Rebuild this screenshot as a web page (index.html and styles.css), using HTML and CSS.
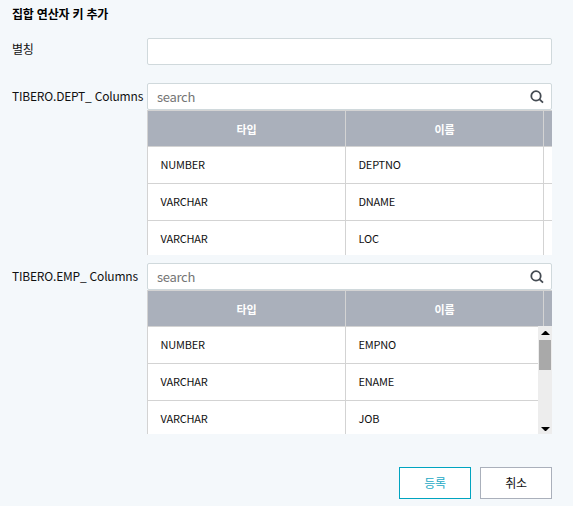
FILE: index.html
```html
<!DOCTYPE html>
<html lang="ko">
<head>
<meta charset="utf-8">
<title>집합 연산자 키 추가</title>
<link rel="stylesheet" href="styles.css">
</head>
<body>
<main class="dialog">
  <h1 class="title">집합 연산자 키 추가</h1>
  <div class="row alias">
    <label class="label" for="alias">별칭</label>
    <input class="field" id="alias" type="text">
  </div>
  <div class="row dept">
    <span class="label">TIBERO.DEPT_ Columns</span>
    <section class="picker">
      <div class="search">
        <input class="field" type="text" placeholder="search">
        <svg class="lens" viewBox="0 0 14 14"><circle cx="6" cy="5.9" r="4.7"/><path d="M9.3 9.2L13 12.7"/></svg>
      </div>
      <div class="grid">
        <div class="line head"><span>타입</span><span>이름</span><span></span></div>
        <div class="body">
          <div class="line"><span>NUMBER</span><span>DEPTNO</span><span></span></div>
          <div class="line"><span>VARCHAR</span><span>DNAME</span><span></span></div>
          <div class="line"><span>VARCHAR</span><span>LOC</span><span></span></div>
        </div>
      </div>
    </section>
  </div>
  <div class="row emp">
    <span class="label">TIBERO.EMP_ Columns</span>
    <section class="picker">
      <div class="search">
        <input class="field" type="text" placeholder="search">
        <svg class="lens" viewBox="0 0 14 14"><circle cx="6" cy="5.9" r="4.7"/><path d="M9.3 9.2L13 12.7"/></svg>
      </div>
      <div class="grid">
        <div class="line head"><span>타입</span><span>이름</span><span></span></div>
        <div class="body">
          <div class="line"><span>NUMBER</span><span>EMPNO</span><span></span></div>
          <div class="line"><span>VARCHAR</span><span>ENAME</span><span></span></div>
          <div class="line"><span>VARCHAR</span><span>JOB</span><span></span></div>
        </div>
        <div class="scrollbar">
          <svg class="arrow" viewBox="0 0 9 4" preserveAspectRatio="none"><path d="M0 4L4 0H5L9 4Z"/></svg>
          <div class="thumb"></div>
          <svg class="arrow down" viewBox="0 0 9 4" preserveAspectRatio="none"><path d="M0 0L4 4H5L9 0Z"/></svg>
        </div>
      </div>
    </section>
  </div>
  <div class="actions">
    <button class="button primary">등록</button>
    <button class="button">취소</button>
  </div>
</main>
</body>
</html>
```

FILE: styles.css
```css
* { box-sizing: border-box; }
body {
  margin: 0;
  height: 506px;
  overflow: hidden;
  background: #f4f8fb;
  color: #111;
  font: 12px/18px "Noto Sans CJK KR", sans-serif;
  letter-spacing: -0.2px;
}
.dialog { padding: 5px 21px 0 12px; }
.title { margin: 0; font-size: 12px; line-height: 18px; font-weight: 700; color: #000; }
.row { display: grid; grid-template-columns: 135px 405px; align-items: start; }
.alias { margin-top: 15px; height: 27px; }
.dept { margin-top: 18px; height: 172px; }
.emp { margin-top: 8px; height: 171px; }
.label { margin-top: 4px; white-space: nowrap; }
.alias .label { margin-top: 2px; }
.field {
  display: block;
  width: 405px;
  height: 27px;
  padding: 0 9px 1px;
  border: 1px solid #d0d9dc;
  border-radius: 2px;
  background: #fff;
  font: 13px "Noto Sans CJK KR", sans-serif;
  letter-spacing: -0.3px;
  outline: none;
}
.field::placeholder { color: #757575; opacity: 1; }
.search { position: relative; height: 27px; }
.lens {
  position: absolute;
  top: 7px;
  right: 8px;
  width: 14px;
  height: 14px;
  fill: none;
  stroke: #444b52;
  stroke-width: 1.8;
}
.grid {
  position: relative;
  height: 145px;
  overflow: hidden;
  border-top: 1px solid #d3d3d3;
  border-left: 1px solid #d3d3d3;
  background: #fff;
}
.emp .grid { height: 144px; }
.line {
  display: grid;
  grid-template-columns: 198px 198px 8px;
  height: 37px;
  border-bottom: 1px solid #d3d3d3;
  font-size: 11px;
  line-height: 34px;
}
.line span { padding-left: 12.5px; border-right: 1px solid #d3d3d3; }
.line span:last-child { padding: 0; border: 0; }
.line.head { height: 36px; line-height: 36px; background: #aab0bb; color: #fff; font-weight: 700; }
.head span { padding: 0; text-align: center; }
.scrollbar {
  position: absolute;
  top: 35px;
  right: 0;
  width: 14px;
  height: 108px;
  padding: 5px 1px 3px;
  display: flex;
  flex-direction: column;
  align-items: center;
  background: #ededed;
}
.arrow { width: 9px; height: 4px; flex: none; }
.thumb { width: 12px; height: 30px; margin-top: 5px; background: #a9a9a9; }
.down { margin-top: auto; }
.actions { display: flex; justify-content: flex-end; gap: 9px; margin-top: 33px; }
.button {
  width: 72px;
  height: 32px;
  padding: 0;
  border: 1px solid #aab0bb;
  background: #fff;
  color: #111;
  font: 12px/30px "Noto Sans CJK KR", sans-serif;
  letter-spacing: -0.2px;
}
.primary { border-color: #00a4c0; color: #24a9c5; }
```
